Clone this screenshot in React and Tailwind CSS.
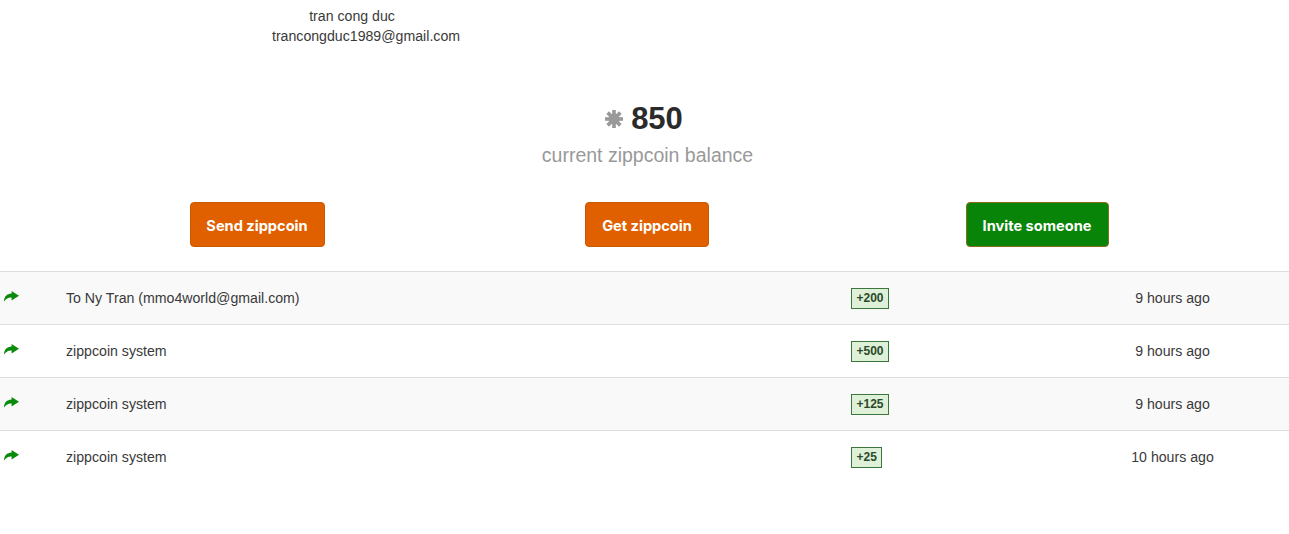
import React from "react";

const rows = [
  { who: "To Ny Tran (mmo4world@gmail.com)", amount: "+200", when: "9 hours ago", striped: true },
  { who: "zippcoin system", amount: "+500", when: "9 hours ago", striped: false },
  { who: "zippcoin system", amount: "+125", when: "9 hours ago", striped: true },
  { who: "zippcoin system", amount: "+25", when: "10 hours ago", striped: false },
];

function Burst() {
  const spokes = [0, 45, 90, 135];
  return (
    <svg width="18" height="18" viewBox="0 0 18 18" className="block">
      <circle cx="9" cy="9" r="5.5" fill="#999999" />
      {spokes.map((a) => (
        <rect key={a} x="7.2" y="0" width="3.6" height="18" fill="#999999" transform={`rotate(${a} 9 9)`} />
      ))}
    </svg>
  );
}

function Arrow() {
  return (
    <svg width="15" height="11" viewBox="0 0 15 11" className="block">
      <path d="M0 10.5C0 5.4 3 2.6 7.6 2.4V0L15 4.7L7.6 9.4V6.6C4.6 6.3 2.2 7.8 0 10.5Z" fill="#0a8a0a" />
    </svg>
  );
}

function Btn({ label, cls }) {
  return (
    <button className={`h-[45px] rounded-[4px] border pt-[2px] text-[14.6px] font-bold leading-[20px] text-white font-['Inter',sans-serif] ${cls}`}>
      {label}
    </button>
  );
}

export default function App() {
  return (
    <div className="h-[534px] w-[1289px] overflow-hidden bg-white font-['Liberation_Sans',Arial,sans-serif] text-[14.15px] leading-[20px] text-[#3a3a3a]">
      <div className="flex h-[271px] flex-col">
        <div className="ml-[171px] flex w-[390px] flex-col items-center pt-[6px]">
          <div className="pr-[28px]">tran cong duc</div>
          <div>trancongduc1989@gmail.com</div>
        </div>
        <div className="mt-[53px] flex flex-col items-center pl-[6px]">
          <div className="flex items-center gap-[8px] pr-[7px]">
            <Burst />
            <span className="text-[31px] font-bold leading-[40px] text-[#2b2b2b]">850</span>
          </div>
          <div className="mt-[3px] text-[19.5px] leading-[26px] text-[#999999]">current zippcoin balance</div>
        </div>
        <div className="ml-[62px] mt-[34px] grid w-[1170px] grid-cols-3 justify-items-center">
          <Btn label="Send zippcoin" cls="w-[135px] border-[#c85a00] bg-[#e06000]" />
          <Btn label="Get zippcoin" cls="w-[124px] border-[#c85a00] bg-[#e06000]" />
          <Btn label="Invite someone" cls="w-[143px] border-[#8a6d1a] bg-[#088408]" />
        </div>
      </div>
      <div>
        {rows.map((r) => (
          <div
            key={r.amount}
            className={`grid h-[53px] grid-cols-[66px_785px_230px_1fr] items-center border-t border-[#dddddd] ${r.striped ? "bg-[#f9f9f9]" : "bg-white"}`}
          >
            <div className="pb-[4px] pl-[4px]">
              <Arrow />
            </div>
            <div>{r.who}</div>
            <div className="flex">
              <span className="border border-[#3c763d] bg-[#dff0d8] px-[4.5px] text-[12px] font-bold leading-[19px] text-[#2a4a2a]">
                {r.amount}
              </span>
            </div>
            <div className="w-[183px] text-center">{r.when}</div>
          </div>
        ))}
      </div>
    </div>
  );
}
